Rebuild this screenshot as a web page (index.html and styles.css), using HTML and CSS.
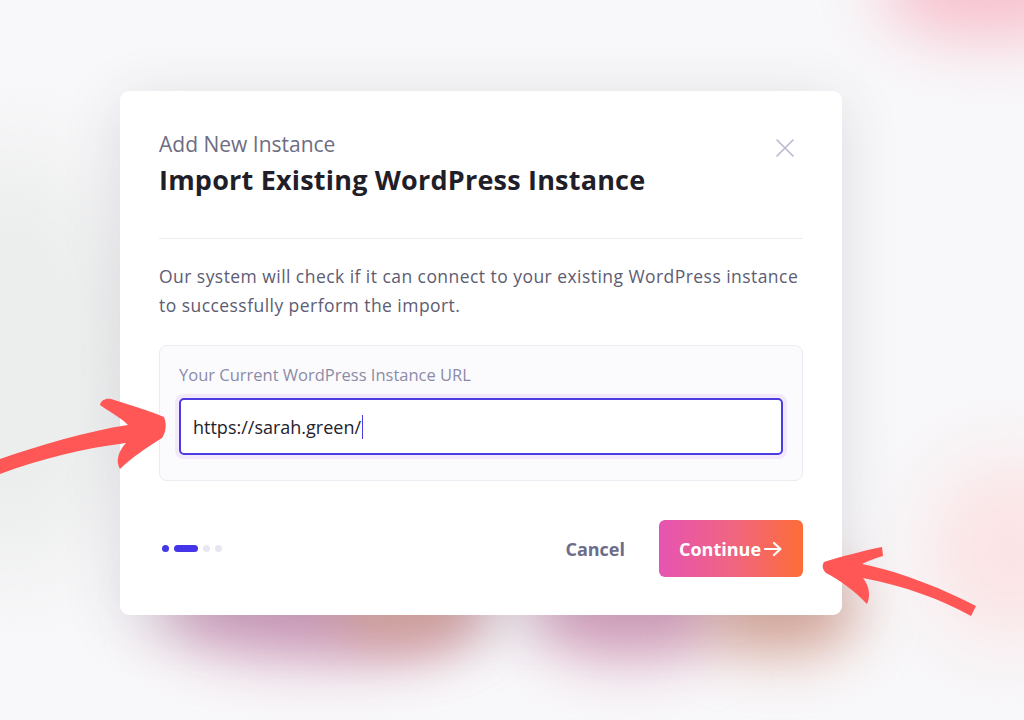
FILE: index.html
```html
<!DOCTYPE html>
<html lang="en">
<head>
<meta charset="utf-8">
<title>Import Existing WordPress Instance</title>
<link rel="stylesheet" href="styles.css">
</head>
<body>
<div class="backdrop">
  <div class="blob blob-tr"></div>
  <div class="blob blob-r"></div>
  <div class="blob blob-b1"></div>
  <div class="blob blob-b2"></div>
  <div class="blob blob-b3"></div>
  <div class="blob blob-b4"></div>
  <div class="blob blob-l"></div>
</div>

<div class="modal">
  <header class="modal-head">
    <div class="titles">
      <div class="eyebrow">Add New Instance</div>
      <h1 class="title">Import Existing WordPress Instance</h1>
    </div>
    <button class="close" aria-label="Close">
      <svg width="18" height="18" viewBox="0 0 18 18"><path d="M1 1L17 17M17 1L1 17" stroke="#b9b8cc" stroke-width="1.6" stroke-linecap="round"/></svg>
    </button>
  </header>
  <hr class="divider">
  <p class="desc">Our system will check if it can connect to your existing WordPress instance to successfully perform the import.</p>
  <div class="field">
    <label class="label">Your Current WordPress Instance URL</label>
    <div class="ring">
      <div class="input"><span class="value">https://sarah.green/</span><span class="caret"></span></div>
    </div>
  </div>
  <footer class="modal-foot">
    <div class="steps">
      <span class="dot on"></span><span class="pill"></span><span class="dot"></span><span class="dot"></span>
    </div>
    <div class="actions">
      <button class="cancel">Cancel</button>
      <button class="continue">Continue<svg width="20" height="16" viewBox="0 0 20 16"><path d="M2 8H17M11 2L17.5 8L11 14" fill="none" stroke="#fff" stroke-width="2.2" stroke-linecap="round" stroke-linejoin="round"/></svg></button>
    </div>
  </footer>
</div>

<svg class="arrows" width="1024" height="720" viewBox="0 0 1024 720">
  <path fill="#ff5656" d="M0,459 C40,445 88,431 128,425 C120,417 108,411 100,405 C101,400 106,398 111,399 C130,405 150,411 164,417 C167,424 166,432 162,438 C146,448 131,458 120,469 C115,461 119,450 126,443 C85,448 40,459 0,474 Z"/>
  <path fill="#ff5656" d="M824,562 C840,557 862,551 882,547 L883,556 C875,558 868,561 862,564 C905,573 945,590 976,606 L971,616 C940,599 905,586 863,578 C869,586 871,595 867,604 C855,591 838,579 826,573 C822,569 822,565 824,562 Z"/>
</svg>
</body>
</html>
```

FILE: styles.css
```css
* { box-sizing: border-box; }
html, body { margin: 0; padding: 0; }
body {
  width: 1024px;
  height: 720px;
  overflow: hidden;
  background: #f8f7f9;
  font-family: "Open Sans", "Noto Sans", sans-serif;
  position: relative;
}
.backdrop { position: absolute; inset: 0; overflow: hidden; }
.blob { position: absolute; border-radius: 50%; }
.blob-tr { left: 880px; top: -60px; width: 220px; height: 100px; background: #f7c2cf; filter: blur(30px); }
.blob-r { left: 930px; top: 460px; width: 160px; height: 180px; background: #fbe3e4; filter: blur(35px); }
.blob-b1 { left: 160px; top: 560px; width: 320px; height: 100px; background: #d3a0bf; filter: blur(28px); }
.blob-b2 { left: 330px; top: 565px; width: 150px; height: 80px; background: #dcab9f; filter: blur(26px); }
.blob-b3 { left: 530px; top: 560px; width: 200px; height: 100px; background: #d9a4c0; filter: blur(28px); }
.blob-b4 { left: 700px; top: 565px; width: 160px; height: 90px; background: #deae9f; filter: blur(28px); }
.blob-l { left: -120px; top: 150px; width: 260px; height: 420px; background: #eceeed; filter: blur(40px); }

.modal {
  position: relative;
  margin: 91px 0 0 120px;
  width: 722px;
  height: 524px;
  background: #fff;
  border-radius: 9px;
  padding: 39px 39px 0 39px;
  box-shadow: 0 10px 60px rgba(60, 50, 80, 0.14);
  display: flex;
  flex-direction: column;
}
.modal-head { display: flex; justify-content: space-between; align-items: flex-start; }
.eyebrow { font-size: 21px; color: #6e6d82; line-height: 28px; }
.title { margin: 5px 0 0; font-size: 27px; font-weight: 700; color: #1f1e29; line-height: 34px; letter-spacing: 0.2px; }
.close { border: 0; background: none; padding: 0; margin: 9px 9px 0 0; width: 18px; height: 18px; }
.divider { border: 0; border-top: 1px solid #ececf2; margin: 41px 0 0; }
.desc { margin: 23px 0 0; font-size: 17.5px; line-height: 29px; color: #5d5c72; letter-spacing: 0.45px; }
.field {
  margin-top: 25px;
  border: 1px solid #ebebf2;
  background: #fbfbfe;
  border-radius: 8px;
  padding: 19px 15px 21px 15px;
}
.label { display: block; font-size: 16.5px; color: #8c8ba6; line-height: 20px; margin-left: 4px; }
.ring { margin-top: 9px; padding: 4px; border-radius: 8px; background: #f3e9fb; }
.input {
  height: 57px;
  border: 2px solid #4d3de0;
  border-radius: 5px;
  background: #fff;
  display: flex;
  align-items: center;
  padding-left: 12px;
}
.value { font-size: 18px; color: #23222c; }
.caret { width: 1px; height: 24px; background: #4d3de0; margin-left: 1px; }
.modal-foot { margin-top: 39px; display: flex; justify-content: space-between; align-items: center; }
.steps { display: flex; align-items: center; gap: 5px; padding-left: 3px; }
.dot { width: 7px; height: 7px; border-radius: 50%; background: #e7e6f1; }
.dot.on { background: #4535e8; }
.pill { width: 24px; height: 7px; border-radius: 4px; background: #4535e8; }
.actions { display: flex; align-items: center; gap: 34px; }
.cancel { border: 0; background: none; font-family: inherit; font-size: 18px; font-weight: 700; color: #6d6c8a; padding: 0; }
.continue {
  width: 144px;
  height: 57px;
  border: 0;
  border-radius: 6px;
  background: linear-gradient(90deg, #e654b2 0%, #f06482 50%, #fd6d37 100%);
  color: #fff;
  font-family: inherit;
  font-size: 18px;
  font-weight: 700;
  display: flex;
  align-items: center;
  justify-content: center;
  gap: 2px;
}
.arrows { position: absolute; left: 0; top: 0; pointer-events: none; }
```
